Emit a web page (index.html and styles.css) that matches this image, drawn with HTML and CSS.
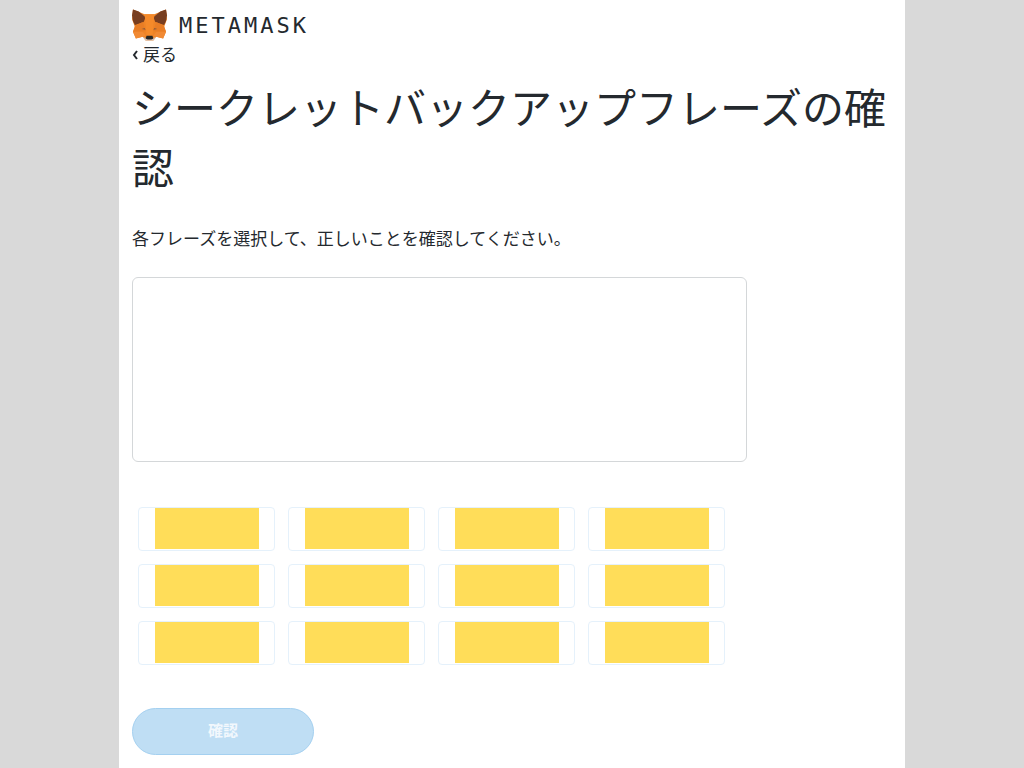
FILE: index.html
```
<!DOCTYPE html>
<html lang="ja">
<head>
<meta charset="utf-8">
<meta name="viewport" content="width=device-width, initial-scale=1">
<title>MetaMask</title>
<link rel="stylesheet" href="styles.css">
</head>
<body>
<main class="page">
  <header class="brand">
    <svg class="fox" viewBox="0 0 36 34" aria-hidden="true">
      <path fill="#ee8427" d="M1 1 13 6H23L35 1 36 11 33 19 35 24 32 31 25 29 22 33H14L11 29 4 31 1 24 3 19 0 11Z"/>
      <path fill="#783e20" d="M1 1 7 3 14 9 12 14 3 17 1 13 0 7Z"/>
      <path fill="#783e20" d="M35 1 29 3 22 9 24 14 33 17 35 13 36 7Z"/>
      <path fill="#f58a2a" d="M13 6H23L22 17 21 28H15L14 17Z"/>
      <path fill="#e87d25" d="M3 18 11 14 14 23 10 24 1 24Z"/>
      <path fill="#e87d25" d="M33 18 25 14 22 23 26 24 35 24Z"/>
      <path fill="#f18a34" d="M1 24H11L14 28 11 29 4 31Z"/>
      <path fill="#f18a34" d="M35 24H25L22 28 25 29 32 31Z"/>
      <path fill="#8a5a3c" d="M10 21 13 20 14 22Z"/>
      <path fill="#8a5a3c" d="M26 21 23 20 22 22Z"/>
      <path fill="#d5bfb2" d="M11 29 15 31H21L25 29 22 33H14Z"/>
      <path fill="#282725" d="M15 28H21L22 31 20 32H16L14 31Z"/>
    </svg>
    <span class="wordmark">METAMASK</span>
  </header>
  <a class="back" href="#"><svg class="chevron" viewBox="0 0 8 10" aria-hidden="true"><path d="M5 2 2 6l3 4"/></svg>戻る</a>
  <h1 class="title">シークレットバックアップフレーズの確認</h1>
  <p class="description">各フレーズを選択して、正しいことを確認してください。</p>
  <div class="selected" role="group" aria-label="選択したフレーズ"></div>
  <div class="words">
    <button class="word" type="button" aria-label="単語 1"><span class="mask"></span></button>
    <button class="word" type="button" aria-label="単語 2"><span class="mask"></span></button>
    <button class="word" type="button" aria-label="単語 3"><span class="mask"></span></button>
    <button class="word" type="button" aria-label="単語 4"><span class="mask"></span></button>
    <button class="word" type="button" aria-label="単語 5"><span class="mask"></span></button>
    <button class="word" type="button" aria-label="単語 6"><span class="mask"></span></button>
    <button class="word" type="button" aria-label="単語 7"><span class="mask"></span></button>
    <button class="word" type="button" aria-label="単語 8"><span class="mask"></span></button>
    <button class="word" type="button" aria-label="単語 9"><span class="mask"></span></button>
    <button class="word" type="button" aria-label="単語 10"><span class="mask"></span></button>
    <button class="word" type="button" aria-label="単語 11"><span class="mask"></span></button>
    <button class="word" type="button" aria-label="単語 12"><span class="mask"></span></button>
  </div>
  <button class="confirm" type="button" disabled>確認</button>
</main>
</body>
</html>
```
FILE: styles.css
```
* { box-sizing: border-box; }

body {
  margin: 0;
  background: #d9d9d9;
  color: #24292e;
  font-family: "Noto Sans CJK JP", sans-serif;
  font-size: 17px;
}

.page {
  display: flex;
  flex-direction: column;
  align-items: flex-start;
  width: 77%;
  max-width: 786px;
  min-height: 100vh;
  margin: 0 auto;
  padding: 8px 8px 13px 13px;
  background: #fff;
}

.brand {
  display: flex;
  align-items: center;
  gap: 12px;
  height: 34px;
}

.fox {
  width: 35px;
  height: 34px;
}

.wordmark {
  font-family: "DejaVu Sans Mono", monospace;
  font-size: 22px;
  letter-spacing: 3px;
}

.back {
  display: flex;
  align-items: center;
  gap: 3px;
  color: inherit;
  line-height: 24px;
  text-decoration: none;
}

.chevron {
  width: 8px;
  height: 12px;
  fill: none;
  stroke: currentColor;
  stroke-width: 2;
}

.title {
  margin: 10px 0 30px;
  font-size: 42px;
  font-weight: 400;
  line-height: 60px;
}

.description {
  margin: 0 0 27px;
  line-height: 24px;
}

.selected {
  width: 100%;
  max-width: 615px;
  min-height: 185px;
  border: 1px solid #d4d7d9;
  border-radius: 6px;
}

.words {
  display: grid;
  grid-template-columns: repeat(4, 1fr);
  gap: 13px;
  width: 100%;
  max-width: 599px;
  margin: 45px 0 43px;
  padding: 0 6px;
}

.word {
  display: flex;
  height: 44px;
  padding: 0 15px 0 16px;
  border: 1px solid #e5f1fb;
  border-radius: 4px;
  background: #fff;
}

.mask {
  flex: 1;
  height: 41px;
  background: #ffdd59;
}

.confirm {
  width: 182px;
  height: 47px;
  padding: 0 0 4px;
  border: 1px solid #a4d0f0;
  border-radius: 24px;
  background: #bfdef4;
  color: #f2f8fd;
  font-family: inherit;
  font-size: 15px;
  font-weight: 700;
}
```
